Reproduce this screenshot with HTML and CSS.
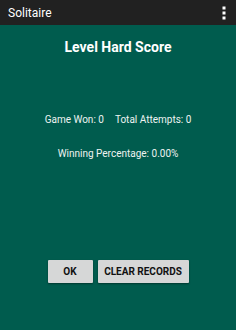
FILE: index.html
```html
<!DOCTYPE html>
<html lang="en">
<head>
  <meta charset="UTF-8">
  <meta name="viewport" content="width=device-width, initial-scale=1.0">
  <title>Solitaire</title>
  <link rel="stylesheet" href="styles.css">
</head>
<body>
  <div class="app-bar">
    <span class="app-title">Solitaire</span>
    <svg class="menu-icon" width="4" height="14" viewBox="0 0 4 14">
      <rect x="0.5" y="0.5" width="3" height="3" fill="#fff"/>
      <rect x="0.5" y="5.5" width="3" height="3" fill="#fff"/>
      <rect x="0.5" y="10.5" width="3" height="3" fill="#fff"/>
    </svg>
  </div>
  <div class="content">
    <h1 class="score-title">Level Hard Score</h1>
    <p class="stats">
      <span>Game Won: 0</span>
      <span>Total Attempts: 0</span>
    </p>
    <p class="percentage">Winning Percentage: 0.00%</p>
    <div class="btn-container">
      <button class="btn btn--ok">OK</button>
      <button class="btn btn--clear">CLEAR RECORDS</button>
    </div>
  </div>
</body>
</html>
```

FILE: styles.css
```css
body {
  margin: 0;
  font-family: Roboto, "Liberation Sans", sans-serif;
  background-color: #005c4e;
  height: 330px;
  overflow: hidden;
}

.app-bar {
  height: 25px;
  background-color: #212121;
  display: flex;
  align-items: center;
  justify-content: space-between;
  padding: 0 10px 0 8px;
}

.app-title {
  color: #fff;
  font-size: 12px;
}

.menu-icon {
  display: block;
}

.content {
  display: flex;
  flex-direction: column;
  align-items: center;
  color: #fff;
}

.score-title {
  font-size: 14px;
  font-weight: bold;
  margin: 14px 0 0;
}

.stats {
  font-size: 10px;
  margin: 59px 0 0;
  display: flex;
  gap: 11px;
  color: #eef3f1;
}

.percentage {
  font-size: 10px;
  margin: 23px 0 0;
  color: #eef3f1;
}

.btn-container {
  display: flex;
  gap: 5px;
  margin-top: 101px;
}

.btn {
  font-family: Roboto, "Liberation Sans", sans-serif;
  font-size: 10px;
  font-weight: bold;
  height: 23px;
  background-color: #d6d7d7;
  color: #111;
  border: none;
  border-radius: 1px;
  box-shadow: 0 1px 2px rgba(0, 0, 0, 0.4);
  padding: 0;
}

.btn--ok {
  width: 45px;
}

.btn--clear {
  width: 91px;
}
```
